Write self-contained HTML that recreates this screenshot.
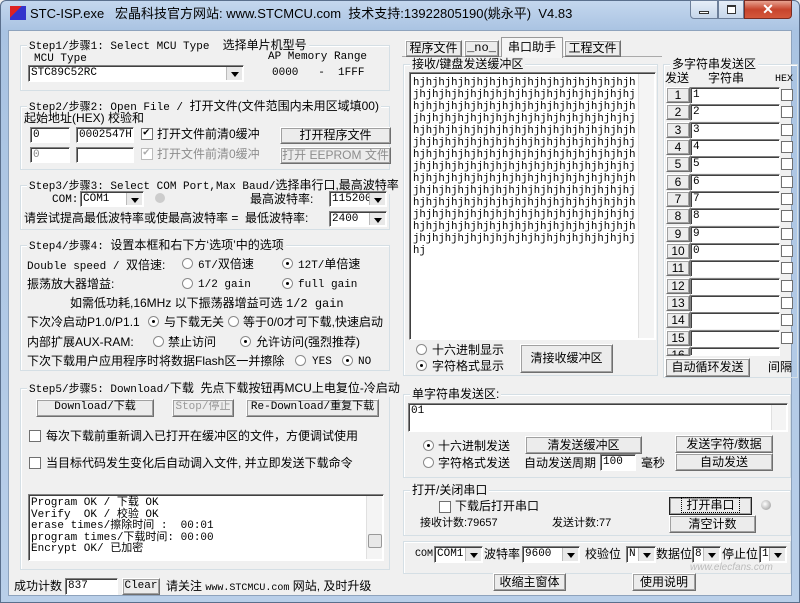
<!DOCTYPE html>
<html><head><meta charset="utf-8">
<style>
*{box-sizing:border-box;margin:0;padding:0}
body{width:800px;height:603px;overflow:hidden;background:#f0f0f0;font-family:"Liberation Mono","Noto Sans CJK SC",monospace;font-size:11px;line-height:14px;color:#000;position:relative}
.a{position:absolute;white-space:nowrap}
.frame{position:absolute;left:0;top:0;width:800px;height:603px;background:linear-gradient(#c4d7ee,#a9c3e2 30px,#b9cfe9);border:1px solid #5a6f8c;border-radius:6px 6px 0 0}
.client{position:absolute;left:8px;top:30px;width:784px;height:566px;background:#f0f0f0;border:1px solid #8ea3bd}
.g{position:absolute;border:1px solid #d5dfe5;box-shadow:inset 1px 1px 0 #fff}
.g>.lg{position:absolute;top:-8px;left:6px;background:#f0f0f0;padding:0 2px;white-space:nowrap;line-height:14px}
.btn{position:absolute;background:#ececec;border:1px solid;border-color:#fff #6f6f6f #6f6f6f #fff;box-shadow:1px 1px 0 #a0a0a0 inset,-1px -1px 0 #a0a0a0 inset;text-align:center;font-family:"Liberation Sans","Noto Sans CJK SC",sans-serif;font-size:12px;white-space:nowrap}
.in{position:absolute;background:#fff;border:1px solid;border-color:#828282 #fff #fff #828282;box-shadow:inset 1px 1px 0 #404040;padding-left:2px;white-space:nowrap;overflow:hidden;line-height:15px}
.cb{position:absolute;width:12px;height:12px;background:#fff;border:1px solid #707070}
.rb{position:absolute;width:11px;height:11px;border-radius:50%;background:#fff;border:1px solid #8a8a8a}
.rb.on::after{content:"";position:absolute;left:3px;top:3px;width:3px;height:3px;border-radius:50%;background:#000}
.dd{position:absolute;right:1px;top:1px;bottom:1px;width:16px;background:#e8e8e8;border-left:1px solid #bbb}
.dd::after{content:"";position:absolute;left:4px;top:5px;border:4px solid transparent;border-top:5px solid #000}
.cn{font-family:"Liberation Sans","Noto Sans CJK SC",sans-serif;font-size:12px;line-height:15px}
.sb{position:absolute;background:#f4f4f4;border-left:1px solid #e0e0e0}
.rowb{position:absolute;left:666px;width:24px;height:16px;line-height:14px}
</style></head><body>
<div class="frame"></div>
<div class="a" style="left:10px;top:6px;width:16px;height:14px;background:linear-gradient(135deg,#d22 0 40%,#33c 40%);"></div>
<div class="a" style="left:30px;top:6px;font-family:'Liberation Sans','Noto Sans CJK SC',sans-serif;font-size:13px;line-height:16px">STC-ISP.exe &nbsp; 宏晶科技官方网站: www.STCMCU.com &nbsp;技术支持:13922805190(姚永平) &nbsp;V4.83</div>
<div class="a" style="left:690px;top:0;width:28px;height:19px;border:1px solid #6d7f9a;border-radius:0 0 0 4px;background:linear-gradient(#e6eef8,#c6d6ea)"><div style="position:absolute;left:8px;top:10px;width:10px;height:3px;border:1px solid #333;background:#fff"></div></div>
<div class="a" style="left:718px;top:0;width:26px;height:19px;border:1px solid #6d7f9a;background:linear-gradient(#e6eef8,#c6d6ea)"><div style="position:absolute;left:8px;top:4px;width:9px;height:9px;border:1px solid #333;border-top-width:2px;background:#fff"></div></div>
<div class="a" style="left:744px;top:0;width:48px;height:19px;border:1px solid #7a2c22;border-radius:0 0 4px 0;background:linear-gradient(#e8a190,#c7442c 50%,#d4583c);color:#fff;font:bold 14px 'Liberation Sans',sans-serif;text-align:center;line-height:17px">✕</div>
<div class="client"></div>

<!-- Step1 -->
<div class="g" style="left:20px;top:45px;width:370px;height:46px"><span class="lg">Step1/步骤1: Select MCU Type &nbsp;<span class="cn">选择单片机型号</span></span></div>
<div class="a" style="left:34px;top:52px">MCU Type</div>
<div class="in" style="left:28px;top:65px;width:216px;height:17px">STC89C52RC<div class="dd"></div></div>
<div class="a" style="left:268px;top:50px">AP Memory Range</div>
<div class="a" style="left:272px;top:66px">0000 &nbsp; - &nbsp;1FFF</div>

<!-- Step2 -->
<div class="g" style="left:20px;top:106px;width:370px;height:64px"><span class="lg">Step2/步骤2: Open File / <span class="cn">打开文件(文件范围内未用区域填00)</span></span></div>
<div class="a cn" style="left:24px;top:111px">起始地址(HEX) 校验和</div>
<div class="in" style="left:30px;top:127px;width:40px;height:16px">0</div>
<div class="in" style="left:76px;top:127px;width:58px;height:16px">0002547H</div>
<div class="cb" style="left:141px;top:128px"><span style="position:absolute;left:1px;top:-2px;font-size:11px;line-height:12px">✔</span></div>
<div class="a cn" style="left:157px;top:127px">打开文件前清0缓冲</div>
<div class="btn" style="left:280px;top:127px;width:111px;height:17px;line-height:15px">打开程序文件</div>
<div class="in" style="left:30px;top:147px;width:40px;height:16px;color:#888">0</div>
<div class="in" style="left:76px;top:147px;width:58px;height:16px"></div>
<div class="cb" style="left:141px;top:148px;border-color:#bbb;color:#aaa"><span style="position:absolute;left:1px;top:-2px;font-size:11px;line-height:12px">✔</span></div>
<div class="a cn" style="left:157px;top:147px;color:#8d8d8d">打开文件前清0缓冲</div>
<div class="btn" style="left:280px;top:147px;width:111px;height:17px;line-height:15px;color:#8d8d8d">打开 EEPROM 文件</div>

<!-- Step3 -->
<div class="g" style="left:20px;top:185px;width:370px;height:45px"><span class="lg">Step3/步骤3: Select COM Port,Max Baud/<span class="cn">选择串行口,最高波特率</span></span></div>
<div class="a" style="left:52px;top:193px">COM:</div>
<div class="in" style="left:80px;top:191px;width:64px;height:16px">COM1<div class="dd"></div></div>
<div class="a" style="left:155px;top:193px;width:10px;height:10px;border-radius:50%;background:#ccc"></div>
<div class="a cn" style="left:250px;top:192px">最高波特率:</div>
<div class="in" style="left:329px;top:191px;width:58px;height:16px">115200<div class="dd"></div></div>
<div class="a cn" style="left:24px;top:211px">请尝试提高最低波特率或使最高波特率 = &nbsp;最低波特率:</div>
<div class="in" style="left:329px;top:211px;width:58px;height:16px">2400<div class="dd"></div></div>

<!-- Step4 -->
<div class="g" style="left:20px;top:245px;width:370px;height:126px"><span class="lg">Step4/步骤4: <span class="cn">设置本框和右下方‘选项’中的选项</span></span></div>
<div class="a" style="left:27px;top:258px">Double speed / <span class="cn">双倍速:</span></div>
<div class="rb" style="left:182px;top:258px"></div><div class="a" style="left:198px;top:257px">6T/<span class="cn">双倍速</span></div>
<div class="rb on" style="left:282px;top:258px"></div><div class="a" style="left:298px;top:257px">12T/<span class="cn">单倍速</span></div>
<div class="a cn" style="left:27px;top:277px">振荡放大器增益:</div>
<div class="rb" style="left:182px;top:278px"></div><div class="a" style="left:198px;top:278px">1/2 gain</div>
<div class="rb on" style="left:282px;top:278px"></div><div class="a" style="left:298px;top:278px">full gain</div>
<div class="a cn" style="left:70px;top:296px">如需低功耗,16MHz 以下振荡器增益可选 <span style="font-family:'Liberation Mono'">1/2 gain</span></div>
<div class="a cn" style="left:27px;top:315px">下次冷启动P1.0/P1.1</div>
<div class="rb on" style="left:148px;top:316px"></div><div class="a cn" style="left:164px;top:315px">与下载无关</div>
<div class="rb" style="left:228px;top:316px"></div><div class="a cn" style="left:243px;top:315px">等于0/0才可下载,快速启动</div>
<div class="a cn" style="left:27px;top:335px">内部扩展AUX-RAM:</div>
<div class="rb" style="left:153px;top:336px"></div><div class="a cn" style="left:168px;top:335px">禁止访问</div>
<div class="rb on" style="left:240px;top:336px"></div><div class="a cn" style="left:256px;top:335px">允许访问(强烈推荐)</div>
<div class="a cn" style="left:27px;top:354px">下次下载用户应用程序时将数据Flash区一并擦除</div>
<div class="rb" style="left:295px;top:355px"></div><div class="a" style="left:312px;top:355px">YES</div>
<div class="rb on" style="left:342px;top:355px"></div><div class="a" style="left:358px;top:355px">NO</div>

<!-- Step5 -->
<div class="g" style="left:20px;top:388px;width:370px;height:182px"><span class="lg">Step5/步骤5: Download/<span class="cn">下载 &nbsp;先点下载按钮再MCU上电复位-冷启动</span></span></div>
<div class="btn" style="left:36px;top:399px;width:118px;height:18px;font-family:'Liberation Mono','Noto Sans CJK SC';font-size:11px;line-height:15px">Download/下载</div>
<div class="btn" style="left:172px;top:399px;width:62px;height:18px;color:#999;font-family:'Liberation Mono','Noto Sans CJK SC';font-size:11px;line-height:15px">Stop/停止</div>
<div class="btn" style="left:246px;top:399px;width:133px;height:18px;font-family:'Liberation Mono','Noto Sans CJK SC';font-size:11px;line-height:15px">Re-Download/重复下载</div>
<div class="cb" style="left:29px;top:430px"></div><div class="a cn" style="left:46px;top:429px">每次下载前重新调入已打开在缓冲区的文件，方便调试使用</div>
<div class="cb" style="left:29px;top:457px"></div><div class="a cn" style="left:46px;top:456px">当目标代码发生变化后自动调入文件, 并立即发送下载命令</div>
<div class="in" style="left:28px;top:494px;width:356px;height:67px;line-height:11.5px;padding-top:3px">Program OK / 下载 OK<br>Verify &nbsp;OK / 校验 OK<br>erase times/擦除时间 : &nbsp;00:01<br>program times/下载时间: 00:00<br>Encrypt OK/ 已加密</div>
<div class="sb" style="left:366px;top:496px;width:16px;height:63px"><div style="position:absolute;left:1px;top:38px;width:14px;height:14px;border:1px solid #999;background:#e8e8e8;border-radius:2px"></div></div>
<div class="a cn" style="left:14px;top:579px">成功计数</div>
<div class="in" style="left:65px;top:578px;width:53px;height:17px">837</div>
<div class="btn" style="left:122px;top:578px;width:38px;height:17px;font-family:'Liberation Mono';font-size:11px;line-height:14px">Clear</div>
<div class="a cn" style="left:166px;top:579px">请关注 <span style="font-family:'Liberation Mono';font-size:10px">www.STCMCU.com</span> 网站, 及时升级</div>

<!-- Tabs -->
<div class="a" style="left:402px;top:56px;width:260px;height:1px;background:#aaa"></div>
<div class="btn" style="left:405px;top:40px;width:57px;height:17px;line-height:15px">程序文件</div>
<div class="btn" style="left:464px;top:40px;width:35px;height:17px;line-height:15px;font-family:'Liberation Mono'">_no_</div>
<div class="a cn" style="left:501px;top:37px;width:62px;height:21px;background:#f5f5f5;border:1px solid #999;border-bottom:none;text-align:center;line-height:18px">串口助手</div>
<div class="btn" style="left:564px;top:40px;width:57px;height:17px;line-height:15px">工程文件</div>

<!-- Receive -->
<div class="g" style="left:403px;top:64px;width:255px;height:312px"><span class="lg cn">接收/键盘发送缓冲区</span></div>
<div class="in" style="left:409px;top:72px;width:247px;height:268px;padding:4px 0 0 3px;line-height:12px;font-size:10.6px">hjhjhjhjhjhjhjhjhjhjhjhjhjhjhjhjhjh<br>jhjhjhjhjhjhjhjhjhjhjhjhjhjhjhjhjhj<br>hjhjhjhjhjhjhjhjhjhjhjhjhjhjhjhjhjh<br>jhjhjhjhjhjhjhjhjhjhjhjhjhjhjhjhjhj<br>hjhjhjhjhjhjhjhjhjhjhjhjhjhjhjhjhjh<br>jhjhjhjhjhjhjhjhjhjhjhjhjhjhjhjhjhj<br>hjhjhjhjhjhjhjhjhjhjhjhjhjhjhjhjhjh<br>jhjhjhjhjhjhjhjhjhjhjhjhjhjhjhjhjhj<br>hjhjhjhjhjhjhjhjhjhjhjhjhjhjhjhjhjh<br>jhjhjhjhjhjhjhjhjhjhjhjhjhjhjhjhjhj<br>hjhjhjhjhjhjhjhjhjhjhjhjhjhjhjhjhjh<br>jhjhjhjhjhjhjhjhjhjhjhjhjhjhjhjhjhj<br>hjhjhjhjhjhjhjhjhjhjhjhjhjhjhjhjhjh<br>jhjhjhjhjhjhjhjhjhjhjhjhjhjhjhjhjhj<br>hj</div>
<div class="sb" style="left:638px;top:74px;width:16px;height:264px"></div>
<div class="rb" style="left:416px;top:344px"></div><div class="a cn" style="left:432px;top:343px">十六进制显示</div>
<div class="rb on" style="left:416px;top:360px"></div><div class="a cn" style="left:432px;top:359px">字符格式显示</div>
<div class="btn" style="left:520px;top:344px;width:93px;height:29px;line-height:26px">清接收缓冲区</div>

<!-- Multi string -->
<div class="g" style="left:663px;top:64px;width:135px;height:314px"><span class="lg cn">多字符串发送区</span></div>
<div class="a cn" style="left:665px;top:71px">发送</div>
<div class="a cn" style="left:708px;top:71px">字符串</div>
<div class="a" style="left:775px;top:73px;font-size:10px">HEX</div>

<div class="btn rowb" style="top:87px">1</div><div class="in" style="left:690px;top:87px;width:90px;height:17px">1</div><div class="cb" style="left:781px;top:89px"></div>
<div class="btn rowb" style="top:104px">2</div><div class="in" style="left:690px;top:104px;width:90px;height:17px">2</div><div class="cb" style="left:781px;top:106px"></div>
<div class="btn rowb" style="top:122px">3</div><div class="in" style="left:690px;top:122px;width:90px;height:17px">3</div><div class="cb" style="left:781px;top:124px"></div>
<div class="btn rowb" style="top:139px">4</div><div class="in" style="left:690px;top:139px;width:90px;height:17px">4</div><div class="cb" style="left:781px;top:141px"></div>
<div class="btn rowb" style="top:156px">5</div><div class="in" style="left:690px;top:156px;width:90px;height:17px">5</div><div class="cb" style="left:781px;top:158px"></div>
<div class="btn rowb" style="top:174px">6</div><div class="in" style="left:690px;top:174px;width:90px;height:17px">6</div><div class="cb" style="left:781px;top:176px"></div>
<div class="btn rowb" style="top:191px">7</div><div class="in" style="left:690px;top:191px;width:90px;height:17px">7</div><div class="cb" style="left:781px;top:193px"></div>
<div class="btn rowb" style="top:208px">8</div><div class="in" style="left:690px;top:208px;width:90px;height:17px">8</div><div class="cb" style="left:781px;top:210px"></div>
<div class="btn rowb" style="top:226px">9</div><div class="in" style="left:690px;top:226px;width:90px;height:17px">9</div><div class="cb" style="left:781px;top:228px"></div>
<div class="btn rowb" style="top:243px">10</div><div class="in" style="left:690px;top:243px;width:90px;height:17px">0</div><div class="cb" style="left:781px;top:245px"></div>
<div class="btn rowb" style="top:260px">11</div><div class="in" style="left:690px;top:260px;width:90px;height:17px"></div><div class="cb" style="left:781px;top:262px"></div>
<div class="btn rowb" style="top:278px">12</div><div class="in" style="left:690px;top:278px;width:90px;height:17px"></div><div class="cb" style="left:781px;top:280px"></div>
<div class="btn rowb" style="top:295px">13</div><div class="in" style="left:690px;top:295px;width:90px;height:17px"></div><div class="cb" style="left:781px;top:297px"></div>
<div class="btn rowb" style="top:312px">14</div><div class="in" style="left:690px;top:312px;width:90px;height:17px"></div><div class="cb" style="left:781px;top:314px"></div>
<div class="btn rowb" style="top:330px">15</div><div class="in" style="left:690px;top:330px;width:90px;height:17px"></div><div class="cb" style="left:781px;top:332px"></div>
<div class="btn rowb" style="top:347px;height:9px;overflow:hidden;line-height:14px">16</div><div class="in" style="left:690px;top:347px;width:90px;height:9px"></div>
<div class="btn" style="left:665px;top:358px;width:85px;height:19px;line-height:17px">自动循环发送</div>
<div class="a cn" style="left:768px;top:360px">间隔</div>

<!-- Single string -->
<div class="g" style="left:403px;top:394px;width:388px;height:84px"><span class="lg cn">单字符串发送区:</span></div>
<div class="in" style="left:408px;top:403px;width:380px;height:29px">01</div>
<div class="sb" style="left:771px;top:405px;width:15px;height:25px"></div>
<div class="rb on" style="left:423px;top:440px"></div><div class="a cn" style="left:438px;top:439px">十六进制发送</div>
<div class="rb" style="left:423px;top:457px"></div><div class="a cn" style="left:438px;top:456px">字符格式发送</div>
<div class="btn" style="left:525px;top:436px;width:117px;height:18px;line-height:16px">清发送缓冲区</div>
<div class="a cn" style="left:524px;top:456px">自动发送周期</div>
<div class="in" style="left:600px;top:454px;width:36px;height:17px">100</div>
<div class="a cn" style="left:641px;top:456px">毫秒</div>
<div class="btn" style="left:675px;top:435px;width:98px;height:18px;line-height:16px">发送字符/数据</div>
<div class="btn" style="left:675px;top:453px;width:98px;height:18px;line-height:16px">自动发送</div>

<!-- open/close -->
<div class="g" style="left:403px;top:490px;width:388px;height:46px"><span class="lg cn">打开/关闭串口</span></div>
<div class="cb" style="left:439px;top:501px"></div><div class="a cn" style="left:455px;top:499px">下载后打开串口</div>
<div class="a cn" style="left:420px;top:516px;font-size:11px">接收计数:79657</div>
<div class="a cn" style="left:552px;top:516px;font-size:11px">发送计数:77</div>
<div class="btn" style="left:669px;top:497px;width:83px;height:18px;line-height:15px;border:1px solid #222"><span style="border:1px dotted #000;padding:0 4px">打开串口</span></div>
<div class="btn" style="left:669px;top:515px;width:87px;height:18px;line-height:16px">清空计数</div>
<div class="a" style="left:761px;top:500px;width:10px;height:10px;border-radius:50%;background:radial-gradient(circle at 40% 40%,#fff,#bbb 60%,#888)"></div>

<!-- bottom config -->
<div class="g" style="left:403px;top:541px;width:388px;height:33px"></div>
<div class="a" style="left:415px;top:548px;font-size:10px">COM</div>
<div class="in" style="left:434px;top:546px;width:49px;height:17px">COM1<div class="dd"></div></div>
<div class="a cn" style="left:484px;top:547px">波特率</div>
<div class="in" style="left:522px;top:546px;width:58px;height:17px">9600<div class="dd"></div></div>
<div class="a cn" style="left:585px;top:547px">校验位</div>
<div class="in" style="left:626px;top:546px;width:30px;height:17px">N<div class="dd"></div></div>
<div class="a cn" style="left:656px;top:547px">数据位</div>
<div class="in" style="left:692px;top:546px;width:29px;height:17px">8<div class="dd"></div></div>
<div class="a cn" style="left:722px;top:547px">停止位</div>
<div class="in" style="left:759px;top:546px;width:28px;height:17px">1<div class="dd"></div></div>
<div class="btn" style="left:493px;top:573px;width:73px;height:18px;line-height:16px">收缩主窗体</div>
<div class="btn" style="left:632px;top:573px;width:64px;height:18px;line-height:16px">使用说明</div>
<div class="a" style="left:690px;top:562px;font:italic 10px 'Liberation Sans',sans-serif;color:#bbb">www.elecfans.com</div>
</body></html>
